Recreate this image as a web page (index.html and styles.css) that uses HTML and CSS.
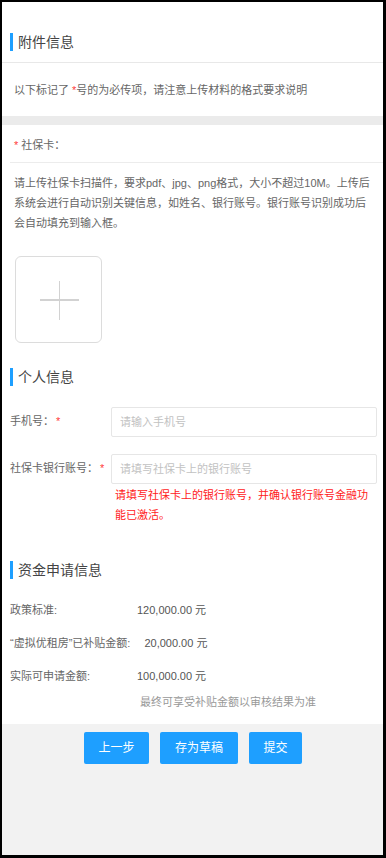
FILE: index.html
```html
<!DOCTYPE html>
<html lang="zh-CN">
<head>
<meta charset="utf-8">
<title>附件信息</title>
<link rel="stylesheet" href="styles.css">
</head>
<body>
<div class="frame">
  <div class="card">
    <div class="sec-head">
      <h2 class="title">附件信息</h2>
    </div>
    <p class="intro">以下标记了 <span class="req">*</span>号的为必传项，请注意上传材料的格式要求说明</p>
  </div>
  <div class="band"></div>
  <div class="card main">
    <div class="field-label"><span class="req">*</span> 社保卡：</div>
    <p class="desc">请上传社保卡扫描件，要求pdf、jpg、png格式，大小不超过10M。上传后系统会进行自动识别关键信息，如姓名、银行账号。银行账号识别成功后会自动填充到输入框。</p>
    <div class="upload" aria-label="上传">
      <span class="plus-h"></span>
      <span class="plus-v"></span>
    </div>

    <h2 class="title title-mid">个人信息</h2>
    <div class="form-row">
      <label class="form-label">手机号：<span class="req">*</span></label>
      <div class="form-ctl">
        <input class="input" type="text" placeholder="请输入手机号">
      </div>
    </div>
    <div class="form-row row-2">
      <label class="form-label">社保卡银行账号：<span class="req">*</span></label>
      <div class="form-ctl">
        <input class="input" type="text" placeholder="请填写社保卡上的银行账号">
        <div class="error">请填写社保卡上的银行账号，并确认银行账号金融功能已激活。</div>
      </div>
    </div>

    <h2 class="title title-fund">资金申请信息</h2>
    <div class="fund">
      <div class="fund-row"><span class="fund-label">政策标准:</span><span class="fund-val">120,000.00 元</span></div>
      <div class="fund-row"><span class="fund-label">“虚拟优租房”已补贴金额:</span><span class="fund-val">20,000.00 元</span></div>
      <div class="fund-row"><span class="fund-label">实际可申请金额:</span><span class="fund-val">100,000.00 元</span></div>
    </div>
    <p class="note">最终可享受补贴金额以审核结果为准</p>
  </div>
  <div class="footer">
    <button class="btn" type="button">上一步</button>
    <button class="btn" type="button">存为草稿</button>
    <button class="btn" type="button">提交</button>
  </div>
</div>
</body>
</html>
```
FILE: styles.css
```css
* { box-sizing: border-box; }
html, body { margin: 0; padding: 0; }
body {
  font-family: "Liberation Sans", "Noto Sans CJK SC", sans-serif;
  font-size: 11px;
  color: #666;
  background: #fff;
}
.frame {
  width: 386px;
  height: 858px;
  border-style: solid;
  border-color: #000;
  border-width: 2px 3px 3px 2px;
  display: flex;
  flex-direction: column;
  background: #f2f2f2;
  overflow: hidden;
}
.card { background: #fff; }
.sec-head {
  height: 61px;
  padding-top: 30px;
  border-bottom: 1px solid #e8e8e8;
}
.title {
  margin: 0 0 0 8px;
  display: flex;
  align-items: center;
  height: 20px;
  font-size: 14px;
  font-weight: normal;
  color: #444;
  line-height: 20px;
}
.title::before {
  content: "";
  width: 3px;
  height: 18px;
  background: #1e9fff;
  margin-right: 5px;
}
.intro {
  margin: 0;
  padding: 17px 12px 16px;
  line-height: 20px;
}
.req { color: #ff3b3b; }
.band { height: 9px; background: #ebebeb; }
.main { padding-bottom: 12px; }
.field-label {
  margin-left: 8px;
  padding: 10px 0 6px 4px;
  line-height: 21px;
  border-bottom: 1px solid #ececec;
  color: #666;
}
.desc {
  margin: 0;
  padding: 10px 9px 0 12px;
  line-height: 20px;
}
.upload {
  position: relative;
  margin: 23px 0 0 13px;
  width: 87px;
  height: 87px;
  border: 1px solid #dcdcdc;
  border-radius: 6px;
}
.plus-h, .plus-v {
  position: absolute;
  background: #d2d2d2;
}
.plus-h { left: 24px; top: 42px; width: 39px; height: 1.5px; }
.plus-v { left: 42.5px; top: 24px; width: 1.5px; height: 39px; }
.title-mid { margin-top: 24px; }
.form-row {
  display: flex;
  margin-top: 20px;
  padding-right: 6px;
}
.row-2 { margin-top: 17px; }
.form-label {
  width: 101px;
  margin-left: 8px;
  flex: none;
  line-height: 28px;
  color: #666;
  white-space: nowrap;
}
.form-label .req { margin-left: 2px; }
.form-ctl { flex: 1; }
.input {
  display: block;
  width: 100%;
  height: 30px;
  border: 1px solid #e6e6e6;
  border-radius: 2px;
  padding: 0 8px;
  font: inherit;
  color: #333;
  outline: none;
}
.input::placeholder { color: #c2c2c2; }
.error {
  padding: 1px 5px 0 4px;
  font-size: 11px;
  line-height: 20px;
  color: #ff1a1a;
}
.title-fund { margin-top: 35px; }
.fund {
  display: flex;
  flex-direction: column;
  gap: 13px;
  margin-top: 20px;
  padding-left: 8px;
}
.fund-row { line-height: 20px; }
.fund-label {
  display: inline-block;
  min-width: 127px;
  padding-right: 14px;
  color: #666;
}
.fund-val { color: #555; }
.note {
  margin: 6px 0 0 138px;
  line-height: 20px;
  color: #999;
}
.footer {
  flex: 1;
  display: flex;
  justify-content: center;
  align-items: flex-start;
  gap: 11.5px;
  padding-top: 8px;
  padding-left: 1px;
}
.btn {
  height: 32px;
  padding: 0 14.5px;
  border: 0;
  border-radius: 2px;
  background: #1e9fff;
  color: #fff;
  font-family: "Liberation Sans", "Noto Sans CJK SC", sans-serif;
  font-size: 12px;
  line-height: 32px;
  cursor: pointer;
}
```
